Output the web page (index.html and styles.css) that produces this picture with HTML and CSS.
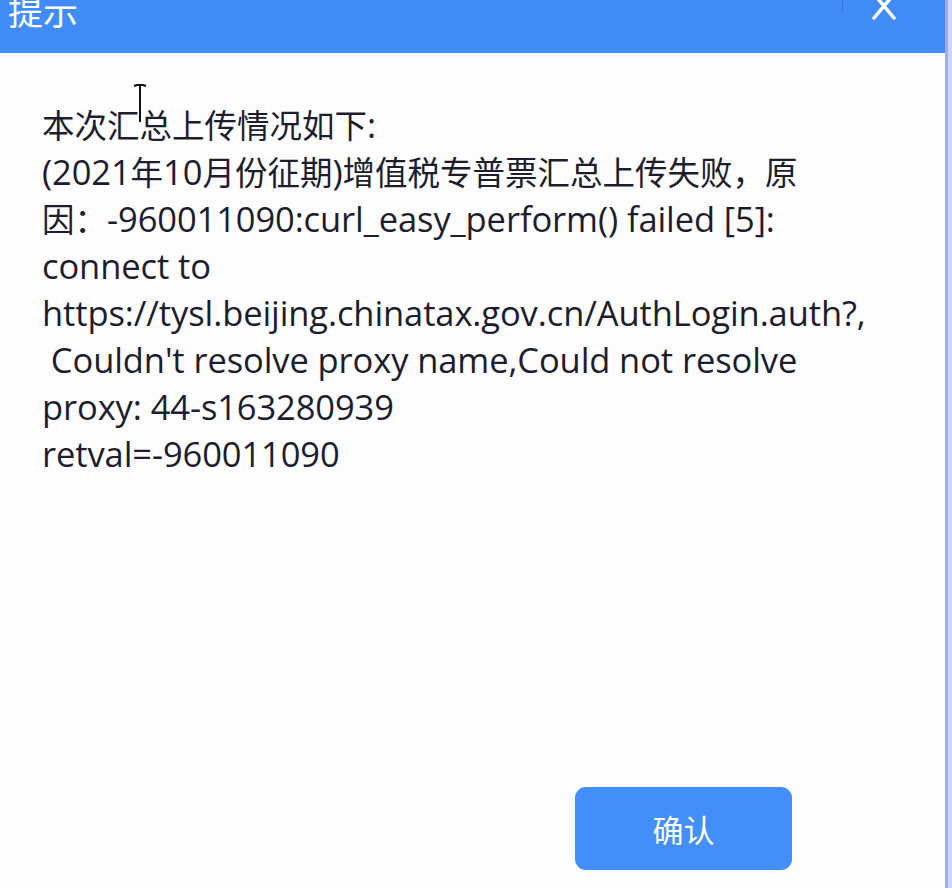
FILE: index.html
```html
<!DOCTYPE html>
<html lang="zh-CN">
<head>
    <meta charset="UTF-8">
    <title>提示</title>
    <link rel="stylesheet" href="styles.css">
</head>
<body>
    <div class="dialog">
        <div class="dialog-header">
            <span class="dialog-title">提示</span>
            <span class="header-divider"></span>
            <svg class="close-icon" width="26" height="22" viewBox="0 0 26 22">
                <path d="M3 -6 L23 18 M23 -6 L3 18" stroke="#ffffff" stroke-width="3.5" stroke-linecap="round" fill="none"/>
            </svg>
        </div>
        <div class="dialog-body">
            <p class="message"><span class="cjk">本次汇总上传情况如下</span>:<br>(2021<span class="cjk">年</span>10<span class="cjk">月份征期</span>)<span class="cjk">增值税专普票汇总上传失败，原</span><br><span class="cjk">因：</span>-960011090:curl_easy_perform() failed [5]:<br>connect to<br>https://tysl.beijing.chinatax.gov.cn/AuthLogin.auth?,<br>&nbsp;Couldn't resolve proxy name,Could not resolve<br>proxy: 44-s163280939<br>retval=-960011090</p>
            <svg class="cursor" width="14" height="40" viewBox="0 0 14 40">
                <path d="M1 2 L4 1 L10 1 L13 2 M7 1 L7 38" stroke="#111111" stroke-width="2" fill="none"/>
            </svg>
        </div>
        <div class="dialog-footer">
            <button class="confirm-btn">确认</button>
        </div>
    </div>
</body>
</html>
```

FILE: styles.css
```css
body {
    margin: 0;
    background: #cbd6fa;
    font-family: 'Open Sans', 'Noto Sans CJK SC', sans-serif;
}

.dialog {
    width: 945px;
    height: 888px;
    background: #fdfdff;
    border-right: 3px solid #a3abef;
    display: flex;
    flex-direction: column;
}

.dialog-header {
    height: 53px;
    background: #428cf8;
    display: flex;
    align-items: flex-start;
    overflow: hidden;
}

.dialog-title {
    color: #ffffff;
    font-family: 'Noto Sans CJK SC', sans-serif;
    font-size: 35px;
    line-height: 36px;
    margin-top: -8px;
    margin-left: 8px;
}

.header-divider {
    width: 1px;
    height: 11px;
    background: rgba(40, 70, 140, 0.35);
    margin-left: auto;
}

.close-icon {
    margin-left: 28px;
    margin-right: 48px;
}

.dialog-body {
    flex: 1;
    padding: 0 42px;
    position: relative;
}

.message {
    margin: 48px 0 0 0;
    font-size: 34.5px;
    line-height: 47px;
    letter-spacing: -0.1px;
    color: #1d1d2d;
}

.message .cjk {
    font-family: 'Noto Sans CJK SC', sans-serif;
    font-size: 32.5px;
    line-height: 1;
    letter-spacing: 0;
}

.cursor {
    position: absolute;
    left: 133px;
    top: 31px;
}

.dialog-footer {
    display: flex;
    justify-content: flex-end;
    padding: 0 153px 18px 0;
}

.confirm-btn {
    width: 217px;
    height: 83px;
    background: #438ef9;
    color: #ffffff;
    border: none;
    border-radius: 11px;
    font-family: 'Noto Sans CJK SC', sans-serif;
    font-size: 31px;
    cursor: pointer;
}
```
